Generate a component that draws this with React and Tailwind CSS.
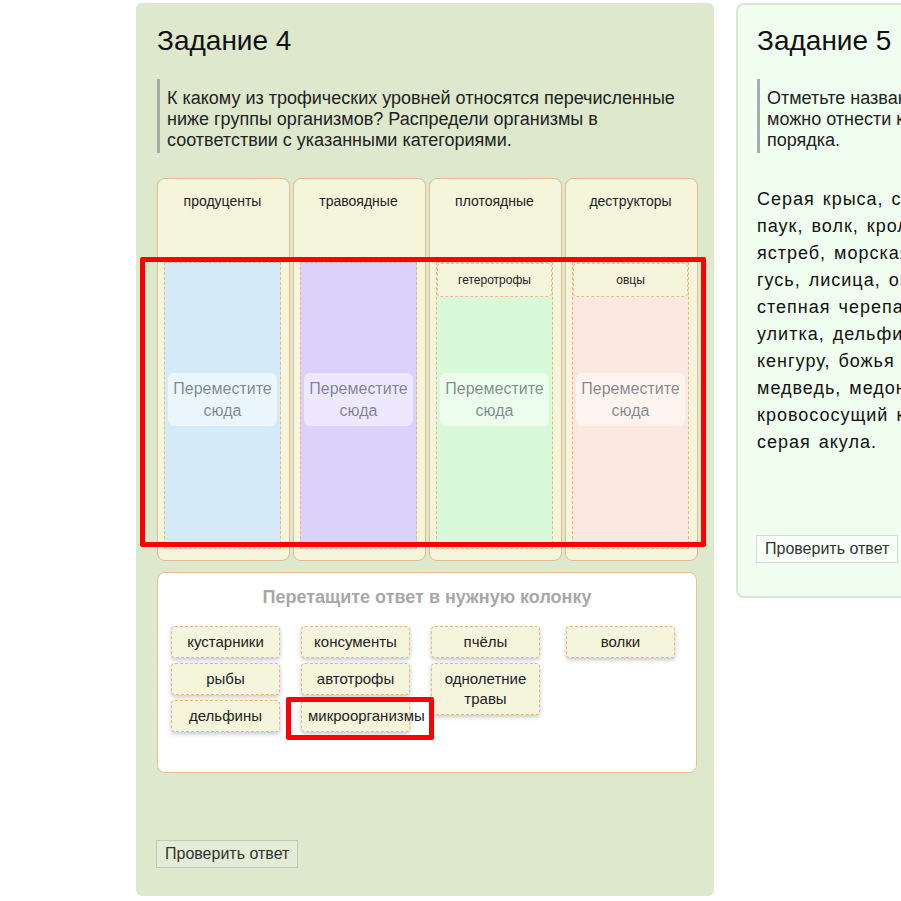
import React from 'react'

const columns = [
  { title: 'продуценты', bg: 'bg-[#d5eaf9]', items: [] },
  { title: 'травоядные', bg: 'bg-[#dcd0fc]', items: [] },
  { title: 'плотоядные', bg: 'bg-[#d9fad9]', items: ['гетеротрофы'] },
  { title: 'деструкторы', bg: 'bg-[#fbe8e0]', items: ['овцы'] },
]

const bank = [
  { ml: 'ml-0', items: ['кустарники', 'рыбы', 'дельфины'] },
  { ml: 'ml-[21px]', items: ['консументы', 'автотрофы', 'микроорганизмы'] },
  { ml: 'ml-[21px]', items: ['пчёлы', 'однолетние травы'] },
  { ml: 'ml-[26px]', items: ['волки'] },
]

const animals = [
  'Серая крыса, сом, муравей,',
  'паук, волк, кролик, сова,',
  'ястреб, морская свинка,',
  'гусь, лисица, окунь, ёж,',
  'степная черепаха, жаба,',
  'улитка, дельфин, тигр,',
  'кенгуру, божья коровка,',
  'медведь, медоносная пчела,',
  'кровососущий комар,',
  'серая акула.',
]

function Column({ col }) {
  return (
    <div className="flex flex-col h-[383px] rounded-lg border border-[#e3bd92] bg-[#f5f5dc]">
      <div className="h-[83px] pt-[14px] pr-[2px] text-center text-[14px] leading-4 text-[#222]">{col.title}</div>
      <div className="pl-[6px] pr-[8px]">
        <div className={`relative h-[287px] border border-dashed border-[#efb585] ${col.bg}`}>
          {col.items.map((it) => (
            <div key={it} className="flex items-center justify-center h-[34px] rounded border border-dashed border-[#e9bf95] bg-[#f5f5dc] text-[12px] text-[#222]">
              {it}
            </div>
          ))}
          <div className="absolute left-[3px] right-[3px] top-[110px] h-[53px] flex items-center justify-center rounded-md bg-white/50 text-center text-[16px] leading-[22px] text-[rgba(35,45,60,0.55)]">
            Переместите<br />сюда
          </div>
        </div>
      </div>
    </div>
  )
}

function Item({ text }) {
  return (
    <div className="w-[109px] min-h-[32px] flex items-center justify-center-safe px-[6px] py-[5px] rounded border border-dashed border-[#e6b98c] bg-[#f5f5dc] text-center text-[15px] leading-[20px] text-[#222] shadow-[0_2px_4px_rgba(0,0,0,0.22)]">
      <span>{text}</span>
    </div>
  )
}

export default function App() {
  return (
    <div className="relative w-full h-[901px] overflow-hidden bg-white font-['Liberation_Sans',Arial,sans-serif]">
      <div className="flex items-start pl-[136px] pt-[3px] gap-[22px]">
        {/* задание 4 */}
        <div className="shrink-0 w-[578px] h-[893px] rounded-md border-2 border-[#dde8cc] bg-[#dde8cc] pt-[19px] pl-[19px] pr-[14px]">
          <h2 className="text-[28px] leading-[34px] text-[#111]">Задание 4</h2>
          <blockquote className="mt-[21px] border-l-[3px] border-[#aaaaaa] pl-[7px] pr-[17px] pt-[9px] pb-[2px] text-[18px] leading-[21px] text-[#222]">
            К какому из трофических уровней относятся перечисленные ниже группы организмов? Распредели организмы в соответствии с указанными категориями.
          </blockquote>
          <div className="mt-[25px] w-[541px] grid grid-cols-4 gap-[3px]">
            {columns.map((c) => <Column key={c.title} col={c} />)}
          </div>
          <div className="mt-[11px] w-[540px] h-[201px] rounded-lg border border-[#e6c29a] bg-white pt-[14px] pl-[13px]">
            <div className="text-center pr-[13px] text-[18px] leading-[20px] font-bold text-[#a8a8a8]">Перетащите ответ в нужную колонку</div>
            <div className="mt-[19px] flex items-start">
              {bank.map((col, i) => (
                <div key={i} className={`flex flex-col gap-[5px] ${col.ml}`}>
                  {col.items.map((t) => <Item key={t} text={t} />)}
                </div>
              ))}
            </div>
          </div>
          <button className="mt-[67px] -ml-px h-[28px] px-[8px] border border-black/15 bg-white/20 text-[16px] text-[#333]">
            Проверить ответ
          </button>
        </div>

        {/* задание 5 */}
        <div className="shrink-0 w-[578px] h-[595px] rounded-lg border-2 border-[#d8e6d4] bg-[#f0fff0] pt-[19px] pl-[19px] pr-[14px]">
          <h2 className="text-[28px] leading-[34px] text-[#111]">Задание 5</h2>
          <blockquote className="mt-[21px] border-l-[3px] border-[#aaaaaa] pl-[7px] pt-[9px] pb-[2px] text-[18px] leading-[21px] text-[#222] whitespace-nowrap">
            Отметьте названия животных, которых<br />
            можно отнести к консументам второго<br />
            порядка.
          </blockquote>
          <div className="mt-[33px] text-[18px] leading-[27px] tracking-[1px] [word-spacing:2px] text-[#111] whitespace-nowrap">
            {animals.map((l) => <div key={l}>{l}</div>)}
          </div>
          <button className="mt-[79px] -ml-px h-[28px] px-[8px] border border-black/15 bg-white/50 text-[16px] text-[#333]">
            Проверить ответ
          </button>
        </div>
      </div>

      {/* выделения */}
      <div className="absolute left-[140px] top-[257px] w-[566px] h-[290px] border-[5px] border-[#ff0000] rounded-[2px]" />
      <div className="absolute left-[286px] top-[697px] w-[148px] h-[43px] border-[5px] border-[#ff0000] rounded-[2px]" />
    </div>
  )
}
